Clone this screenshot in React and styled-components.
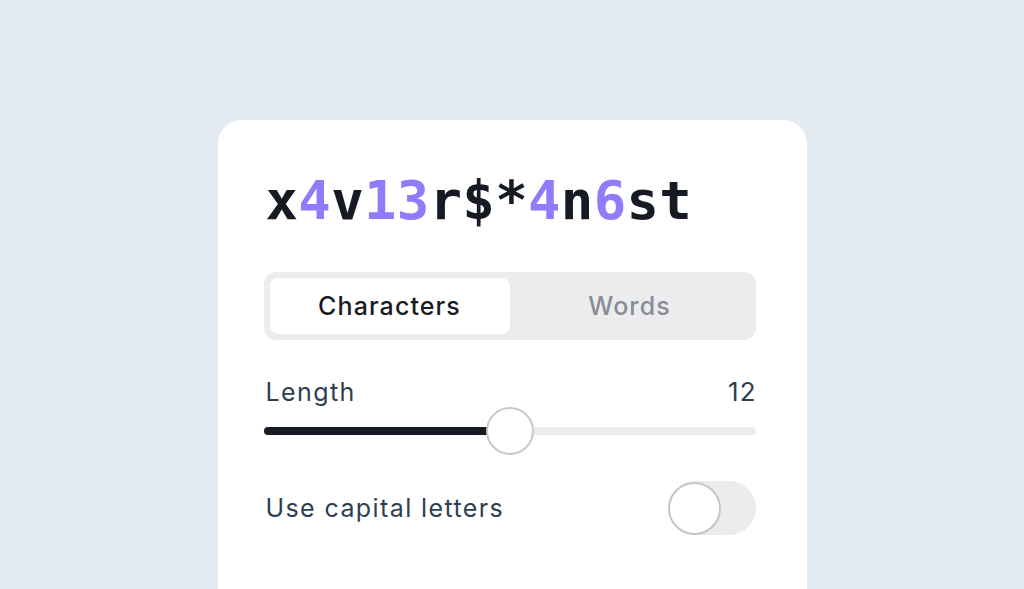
import React from "react";
import styled, { createGlobalStyle } from "styled-components";

const Global = createGlobalStyle`
  html, body { margin: 0; padding: 0; }
  body {
    background: #e4ebf2;
    font-family: Inter, "Noto Sans", sans-serif;
    overflow: hidden;
  }
`;

const Page = styled.div`
  width: 1024px;
  height: 589px;
  display: flex;
  justify-content: center;
  padding-top: 120px;
  box-sizing: border-box;
  overflow: hidden;
`;

const Card = styled.div`
  width: 589px;
  height: 520px;
  flex-shrink: 0;
  background: #ffffff;
  border-radius: 24px;
  box-sizing: border-box;
  padding: 48px 51px 0 46px;
  display: flex;
  flex-direction: column;
`;

const Password = styled.div`
  font-family: "DejaVu Sans Mono", "Liberation Mono", monospace;
  font-weight: bold;
  font-size: 54px;
  letter-spacing: 0.3px;
  line-height: 66px;
  color: #161a22;
  margin-left: 2px;
`;

const Accent = styled.span`
  color: #8f7cfb;
`;

const Segmented = styled.div`
  margin-top: 38px;
  height: 68px;
  background: #ebecee;
  border-radius: 12px;
  padding: 6px;
  box-sizing: border-box;
  display: grid;
  grid-template-columns: 1fr 1fr;
`;

const Tab = styled.div`
  display: flex;
  align-items: center;
  justify-content: center;
  border-radius: 8px;
  font-size: 25px;
  letter-spacing: 1.1px;
  font-weight: 500;
  background: ${(p) => (p.$active ? "#ffffff" : "transparent")};
  color: ${(p) => (p.$active ? "#181b22" : "#8a8c91")};
`;

const Row = styled.div`
  display: flex;
  justify-content: space-between;
  align-items: center;
  color: #2e3f52;
  font-size: 25px;
`;

const Label = styled.span`
  letter-spacing: 1.4px;
`;

const Value = styled.span`
  letter-spacing: 1px;
  margin-right: -1px;
  font-size: 26px;
`;

const LengthRow = styled(Row)`
  margin-top: 36px;
  padding-left: 2px;
`;

const Slider = styled.div`
  position: relative;
  margin-top: 20px;
  height: 8px;
  border-radius: 4px;
  background: #ebecee;
`;

const Fill = styled.div`
  height: 100%;
  border-radius: 4px;
  background: #161a22;
`;

const Thumb = styled.div`
  position: absolute;
  top: 50%;
  width: 44px;
  height: 44px;
  border-radius: 50%;
  background: #fff;
  border: 2px solid #c9c9c9;
  transform: translate(-50%, -50%);
`;

const ToggleRow = styled(Row)`
  margin-top: 46px;
  padding-left: 2px;
`;

const Switch = styled.div`
  width: 88px;
  height: 54px;
  border-radius: 27px;
  background: #ebecee;
  display: flex;
  align-items: center;
`;

const Knob = styled.div`
  width: 53px;
  height: 53px;
  border-radius: 50%;
  background: #fff;
  border: 2px solid #c6c6c6;
  box-sizing: border-box;
`;

export default function App() {
  const pct = 50.2;
  return (
    <>
      <Global />
      <Page>
        <Card>
          <Password>
            x<Accent>4</Accent>v<Accent>13</Accent>r$*<Accent>4</Accent>n<Accent>6</Accent>st
          </Password>
          <Segmented>
            <Tab $active>Characters</Tab>
            <Tab>Words</Tab>
          </Segmented>
          <LengthRow>
            <Label>Length</Label>
            <Value>12</Value>
          </LengthRow>
          <Slider>
            <Fill style={{ width: `${pct}%` }} />
            <Thumb style={{ left: `${pct}%` }} />
          </Slider>
          <ToggleRow>
            <Label>Use capital letters</Label>
            <Switch>
              <Knob />
            </Switch>
          </ToggleRow>
        </Card>
      </Page>
    </>
  );
}
